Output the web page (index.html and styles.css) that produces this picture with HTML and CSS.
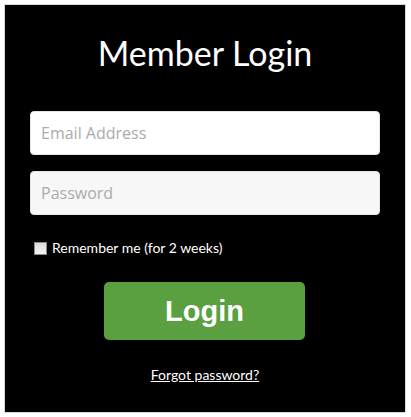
FILE: index.html
```html
<!DOCTYPE html>
<html>
<head>
<meta charset="utf-8">
<link rel="stylesheet" href="styles.css">
</head>
<body>
<div class="panel">
  <h1 class="title">Member Login</h1>
  <form class="form">
    <input class="field field-focus" type="text" placeholder="Email Address">
    <input class="field" type="password" placeholder="Password">
    <label class="remember"><span class="box"></span>Remember me (for 2 weeks)</label>
    <div class="actions"><button class="btn" type="button">Login</button></div>
    <div class="forgot"><a href="#">Forgot password?</a></div>
  </form>
</div>
</body>
</html>
```
FILE: styles.css
```css
html, body { margin: 0; padding: 0; background: #fff; }
body { padding: 4px 0 0 4px; }
.panel {
  width: 402px;
  height: 409px;
  box-sizing: border-box;
  background: #000;
  border: 1px solid #d8d8d8;
  padding: 0 25px;
  font-family: Lato, "Open Sans", sans-serif;
  color: #fff;
}
.title {
  margin: 0;
  padding-top: 27px;
  font-family: Lato, sans-serif;
  font-weight: 400;
  font-size: 34px;
  line-height: 42px;
  text-align: center;
}
.form { display: flex; flex-direction: column; margin-top: 37px; }
.field {
  display: block;
  box-sizing: border-box;
  width: 350px;
  height: 44px;
  margin: 0 0 16px;
  padding: 0 10px;
  border: 1px solid #e6e6e6;
  border-radius: 4px;
  background: #f7f7f7;
  font-family: "Open Sans", sans-serif;
  font-size: 16px;
  color: #333;
  outline: none;
}
.field::placeholder { color: #ababab; }
.field-focus { background: #fff; }
.remember {
  display: flex;
  align-items: center;
  margin: 8px 0 0 4px;
  font-size: 14px;
  line-height: 18px;
  color: #fff;
}
.box {
  width: 11px;
  height: 11px;
  border: 1px solid #8a8a8a;
  background: linear-gradient(#dcdcdc, #f4f4f4);
  margin-right: 5px;
}
.actions { display: flex; justify-content: center; margin-top: 25px; }
.btn {
  width: 201px;
  height: 58px;
  border: none;
  border-radius: 5px;
  background: #5a9f40;
  color: #fff;
  font-family: "Liberation Sans", Arial, sans-serif;
  font-weight: 700;
  font-size: 29px;
  padding: 0;
  margin-right: 1px;
}
.forgot { text-align: center; margin-top: 26px; font-size: 14px; line-height: 18px; }
.forgot a { color: #fff; text-decoration: underline; }
```
